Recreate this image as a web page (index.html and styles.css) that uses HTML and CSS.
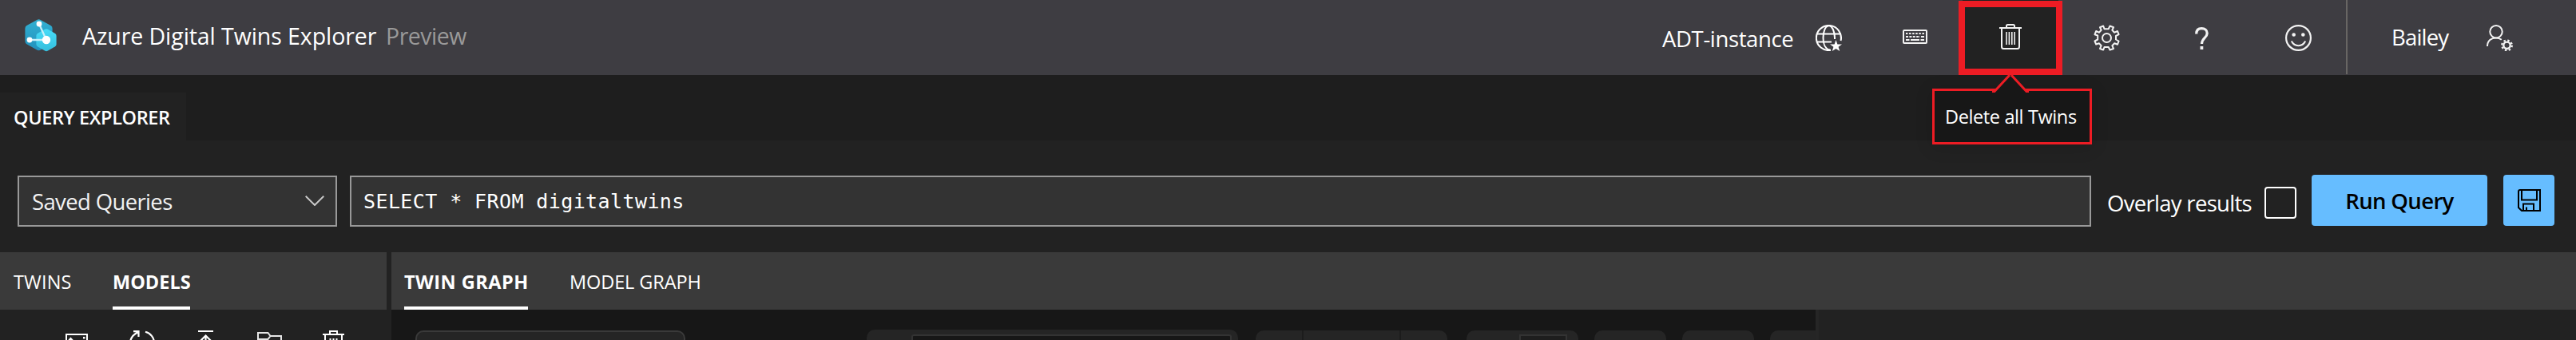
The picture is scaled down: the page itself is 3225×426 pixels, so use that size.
FILE: index.html
```
<!DOCTYPE html>
<html lang="en">
<head>
<meta charset="utf-8">
<title>Azure Digital Twins Explorer</title>
<link rel="stylesheet" href="styles.css">
</head>
<body>
<header class="header">
  <svg class="logo" viewBox="0 0 40 41">
    <defs>
      <linearGradient id="back" x1="0" y1="0" x2="0" y2="1"><stop offset="0" stop-color="#32b0d2"/><stop offset="1" stop-color="#2191bd"/></linearGradient>
      <linearGradient id="front" x1="0" y1="0" x2="0" y2="1"><stop offset="0" stop-color="#47dcf8"/><stop offset="1" stop-color="#35bedd"/></linearGradient>
    </defs>
    <path fill="url(#back)" d="M15.200.900Q17.500-.400 19.800.900L32.600 8Q34.600 9.200 34.600 11.700V27.500Q34.600 30 32.600 31.200L19.800 38.500Q17.500 39.800 15.200 38.500L2.400 31.200Q.400 30 .400 27.500V11.700Q.400 9.200 2.400 8Z"/>
    <path fill="url(#front)" d="M25 12.800Q27 11.700 29 12.800L37.700 17.700Q39.600 18.800 39.600 21V31.300Q39.600 33.500 37.700 34.600L29 39.600Q27 40.700 25 39.600L16.300 34.600Q14.400 33.500 14.400 31.300V21Q14.400 18.800 16.300 17.700Z"/>
    <path stroke="#c6f0fa" stroke-width="2.300" fill="none" d="M18 6 27 26H6"/>
    <circle cx="18" cy="6" r="3.400" fill="#fff"/><circle cx="6" cy="26" r="3.400" fill="#fff"/><circle cx="27" cy="26" r="5.200" fill="#fff"/>
  </svg>
  <div class="title">Azure Digital Twins Explorer</div>
  <div class="preview">Preview</div>
  <div class="instance">
    <span class="instance-name">ADT-instance</span>
    <svg class="icon" viewBox="0 0 33 33">
      <g fill="none" stroke="#fff" stroke-width="2">
        <path d="M31.500 20A15.500 15.500 0 1 0 19 31.800M31.800 19A15.500 15.500 0 0 0 31 11"/>
        <path d="M18.500 31.500C12 31 9.500 24 9.500 16.500S12 1.200 16.500 1.200 24 9 24 16.500V18M2 11.500H31M2 21.500H20"/>
      </g>
      <path fill="#fff" d="M25.500 19 27.400 24.400H33L28.600 27.800 30.200 33 25.500 29.900 20.800 33 22.400 27.800 18 24.400H23.600Z"/>
    </svg>
  </div>
  <button class="command" aria-label="Keyboard shortcuts">
    <svg class="icon keyboard" viewBox="0 0 31 18">
      <rect x="1" y="1" width="29" height="16" rx="1" fill="none" stroke="#f2f2f2" stroke-width="2"/>
      <path stroke="#f2f2f2" stroke-width="2" d="M4 5H27" stroke-dasharray="2.400 1.700"/>
      <path stroke="#f2f2f2" stroke-width="2" d="M4 9H22" stroke-dasharray="3 1.400"/>
      <path stroke="#f2f2f2" stroke-width="2" d="M23 9H27M4 13H8.500M10 13H21M22.500 13H27"/>
    </svg>
  </button>
  <button class="command command-active" aria-label="Delete all Twins">
    <svg class="icon trash" viewBox="0 0 28 32">
      <path fill="none" stroke="#f2f2f2" stroke-width="2" d="M0 5H28M9 5V2.500Q9 1 10.500 1H17.500Q19 1 19 2.500V5M3 5V28.500Q3 31 5.500 31H22.500Q25 31 25 28.500V5"/>
      <path fill="none" stroke="#f2f2f2" stroke-width="1.600" d="M9 10V26M12.400 10V26M15.800 10V26M19.200 10V26"/>
    </svg>
    <span class="highlight"></span>
    <span class="tooltip">Delete all Twins
      <svg class="pointer" viewBox="0 0 46 22"><path fill="#171717" d="M2 22 23 0 44 22Z"/><path fill="none" stroke="#ed1c24" stroke-width="3" d="M0 20.500H3L22 0M24 0 43 20.500H46"/></svg>
    </span>
  </button>
  <button class="command" aria-label="Settings">
    <svg class="icon" viewBox="0 0 33 33">
      <path fill="none" stroke="#f2f2f2" stroke-width="2" stroke-linejoin="round" d="M13.500 5.200 12.200 1.500 8 3.200 9.700 6.800 6.800 9.700 3.200 8 1.500 12.200 5.200 13.500V18.500L1.500 20.500 3.200 24.500 6.800 23.300 9.700 26.200 8 30 12.200 31.500 13.500 28H18.700L20.500 31.500 25 30 23.300 26.200 26.200 23.300 30 24.700 31.600 20.500 28 18.500V14L31.600 12.200 30 8 26.200 9.700 23.300 6.800 25 3.200 20.500 1.500 18.700 5.200Z"/>
      <circle cx="16.500" cy="16.500" r="5.500" fill="none" stroke="#f2f2f2" stroke-width="2"/>
    </svg>
  </button>
  <button class="command" aria-label="Help">
    <svg class="icon help" viewBox="0 0 17 28">
      <path fill="none" stroke="#f2f2f2" stroke-width="3.200" d="M1.700 8.500C1.700 4 4.300 1.700 8.300 1.700S15.200 4 15.200 7.700C15.200 13.500 8.500 13.500 8.500 21"/><path fill="#f2f2f2" d="M6.500 24H10.300V28H6.500Z"/>
    </svg>
  </button>
  <button class="command" aria-label="Feedback">
    <svg class="icon" viewBox="0 0 33 33">
      <circle cx="16.500" cy="16.500" r="15.400" fill="none" stroke="#f2f2f2" stroke-width="2.200"/>
      <circle cx="10.700" cy="12.500" r="2.300" fill="#f2f2f2"/><circle cx="22.300" cy="12.500" r="2.300" fill="#f2f2f2"/>
      <path fill="none" stroke="#f2f2f2" stroke-width="2" d="M7.800 20.500C11.500 28 21.500 28 25.200 20.500"/>
    </svg>
  </button>
  <div class="user">
    <span class="user-name">Bailey</span>
    <svg class="icon" viewBox="0 0 33 33">
      <g fill="none" stroke="#f2f2f2" stroke-width="2">
        <circle cx="12" cy="8.700" r="7.700"/><path d="M1 27C1 20 6 16.400 12 16.400 14.800 16.400 17 17.300 18.800 18.800"/>
        <circle cx="25.500" cy="25.800" r="4.200" stroke-width="2.400"/>
      </g>
      <circle cx="25.500" cy="25.800" r="6.300" fill="none" stroke="#f2f2f2" stroke-width="2.200" stroke-dasharray="2.400 2.548"/>
    </svg>
  </div>
</header>

<div class="explorer-tabs"><div class="explorer-tab">QUERY EXPLORER</div></div>

<section class="query">
  <div class="dropdown">Saved Queries
    <svg class="chevron" viewBox="0 0 24 13"><path fill="none" stroke="#c8c8c8" stroke-width="2" d="M.700.700 12 12 23.300.700"/></svg>
  </div>
  <div class="query-text">SELECT * FROM digitaltwins</div>
  <div class="overlay-label">Overlay results</div>
  <div class="checkbox"></div>
  <button class="run">Run Query</button>
  <button class="save" aria-label="Save query">
    <svg class="save-icon" viewBox="0 0 29 28"><path fill="none" stroke="#000" stroke-width="2" d="M3 1H28V27H5L1 23V3Q1 1 3 1ZM5 1V13.500H24V1M7 27V18.500H20V27M11 27V22.500"/></svg>
  </button>
</section>

<main class="workspace">
  <section class="side">
    <nav class="tabs">
      <div class="tab twins">TWINS</div>
      <div class="tab models selected">MODELS</div>
    </nav>
    <div class="side-tools">
      <svg class="tool image" viewBox="0 0 28 28"><path fill="none" stroke="#fff" stroke-width="2" d="M1 1H27V23H1ZM1 12 6.500 6 16 16"/><path fill="#fff" d="M22 4H24.500V6.500H22Z"/></svg>
      <svg class="tool refresh" viewBox="0 0 32 32"><path fill="none" stroke="#fff" stroke-width="2.200" d="M5 1.200H11.500V8M11 2C5 5 1 10 1 16M20 1.800C26.500 3.500 31 9 31 16"/></svg>
      <svg class="tool upload" viewBox="0 0 19 32"><path fill="none" stroke="#fff" stroke-width="2.200" d="M0 1H19M9.500 30V7M1.500 14.500 9.500 6.500 17.500 14.500"/></svg>
      <svg class="tool folder" viewBox="0 0 31 28"><path fill="none" stroke="#e6e6e6" stroke-width="2" d="M1 26V1H13.500L16.500 5H30V26ZM1 9H13.500L16.500 5"/></svg>
      <svg class="tool bin" viewBox="0 0 27 32"><path fill="none" stroke="#fff" stroke-width="2" d="M0 5H27M9 5V1H18V5M3 5V31H24V5M9.500 10V26M13.500 10V26M17.500 10V26"/></svg>
    </div>
  </section>
  <section class="graph">
    <nav class="tabs">
      <div class="tab twin-graph selected">TWIN GRAPH</div>
      <div class="tab model-graph">MODEL GRAPH</div>
    </nav>
    <div class="graph-body">
      <div class="canvas">
        <div class="card legend"></div>
        <div class="card filter"><div class="filter-input"></div></div>
        <div class="card split"><span></span><span></span><span></span></div>
        <div class="card zoom"><div class="zoom-input"></div></div>
        <div class="card small"></div>
        <div class="card small second"></div>
        <div class="card last"></div>
      </div>
      <div class="detail"></div>
    </div>
  </section>
</main>
</body>
</html>
```
FILE: styles.css
```
* { box-sizing: border-box; }
body {
  margin: 0;
  height: 426px;
  overflow: hidden;
  background: #222;
  color: #fff;
  font-family: "Open Sans", "Noto Sans", sans-serif;
  white-space: nowrap;
}
button { margin: 0; padding: 0; border: 0; background: none; color: inherit; font: inherit; }
svg { display: block; flex: none; }

.header { display: flex; height: 94px; background: #3e3d42; }
.logo { width: 40px; height: 41px; margin: 24px 0 0 31px; }
.title { margin-left: 32px; width: 380px; font-size: 28.5px; letter-spacing: -0.07px; line-height: 90px; }
.preview { font-size: 28.5px; letter-spacing: -0.5px; line-height: 90px; color: #999; }
.instance { display: grid; grid-template-columns: 192px 33px; width: 256px; margin-left: auto; }
.instance-name { font-size: 27.5px; letter-spacing: -0.37px; line-height: 97px; }
.icon { width: 33px; height: 33px; margin-top: 31px; }
.command { position: relative; display: flex; justify-content: center; align-items: flex-start; width: 120px; height: 94px; }
.command-active { background: #222; z-index: 1; }
.keyboard { width: 31px; height: 18px; margin-top: 37px; }
.trash { width: 28px; height: 32px; margin-top: 30px; }
.help { width: 17px; height: 28px; margin: 34px 2px 0 0; }
.highlight { position: absolute; left: -5px; top: 1px; width: 130px; height: 93px; border: 8px solid #ed1c24; }
.tooltip {
  position: absolute;
  left: -38px;
  top: 111px;
  width: 200px;
  height: 70px;
  padding-left: 13px;
  border: 3px solid #ed1c24;
  background: #171717;
  box-shadow: 0 3px 20px rgba(0, 0, 0, 0.15);
  font-size: 23.5px;
  letter-spacing: -0.38px;
  line-height: 64px;
  text-align: left;
}
.pointer { position: absolute; left: 72px; top: -20px; width: 46px; height: 22px; }
.user { display: grid; grid-template-columns: 119px 33px; width: 288px; height: 93px; padding-left: 55px; border-left: 2px solid #686664; }
.user-name { font-size: 27.5px; letter-spacing: -0.8px; line-height: 93px; }

.explorer-tabs { height: 82px; padding-top: 22px; background: #1e1e1e; }
.explorer-tab { width: 233px; height: 60px; padding-left: 17px; background: #222; font-size: 23.5px; font-weight: 600; letter-spacing: -0.35px; line-height: 62px; }

.query { display: flex; height: 140px; padding: 44px 27px 0 22px; }
.dropdown {
  display: flex;
  justify-content: space-between;
  width: 400px;
  height: 64px;
  padding: 0 14px 0 16px;
  border: 2px solid #999;
  background: #333;
  color: #f2f2f2;
  font-size: 27.5px;
  letter-spacing: -0.64px;
  line-height: 62px;
}
.chevron { width: 24px; height: 13px; margin-top: 23px; }
.query-text {
  width: 2180px;
  height: 64px;
  margin-left: 16px;
  padding-left: 15px;
  border: 2px solid #999;
  background: #333;
  font-family: "DejaVu Sans Mono", monospace;
  font-size: 25px;
  letter-spacing: 0.4px;
  line-height: 62px;
}
.overlay-label { width: 197px; margin-left: 20px; font-size: 27.5px; letter-spacing: -0.7px; line-height: 69px; }
.checkbox { width: 40px; height: 40px; margin-top: 14px; border: 2px solid #fff; border-radius: 4px; }
.run, .save { height: 64px; margin-top: -1px; border-radius: 4px; background: #66bdff; color: #000; }
.run { width: 220px; margin-left: 19px; font-size: 27.5px; font-weight: 600; letter-spacing: -0.65px; line-height: 65px; }
.save { display: flex; align-items: center; justify-content: center; width: 64px; margin-left: 20px; }
.save-icon { width: 29px; height: 28px; }

.workspace { display: flex; height: 110px; }
.side { width: 484px; margin-right: 6px; }
.graph { flex: 1; }
.tabs { display: flex; height: 72px; background: #3a3a3a; font-size: 23.5px; }
.tab { height: 72px; line-height: 74px; }
.selected { font-weight: 700; box-shadow: inset 0 -4px #fff; }
.twins { margin-left: 17px; letter-spacing: 0.15px; width: 124px; }
.models { width: 97px; }
.twin-graph { width: 155px; margin-left: 16px; letter-spacing: 0.5px; }
.model-graph { margin-left: 52px; letter-spacing: -0.1px; }
.side-tools { display: flex; height: 38px; padding: 26px 0 0 82px; overflow: hidden; }
.image { width: 28px; height: 28px; margin-top: 4px; }
.refresh { width: 32px; height: 32px; margin-left: 52px; }
.upload { width: 19px; height: 32px; margin-left: 54px; }
.folder { width: 31px; height: 28px; margin: 2px 0 0 55px; }
.bin { width: 27px; height: 32px; margin-left: 51px; }

.graph-body { display: flex; height: 38px; }
.canvas { display: flex; width: 1783px; padding: 26px 0 0 30px; background: #171717; overflow: hidden; }
.card { flex: none; height: 40px; border-radius: 10px 10px 0 0; background: #252525; }
.legend { width: 338px; border: 2px solid #3a3a3a; }
.filter { width: 465px; margin: -1px 0 0 227px; padding: 6px 8px 0 56px; }
.filter-input { height: 34px; border: 2px solid #333; border-radius: 3px; background: #171717; }
.split { display: flex; width: 240px; margin-left: 22px; }
.split span:nth-child(1) { width: 58px; }
.split span:nth-child(2) { width: 124px; border: solid #1c1c1c; border-width: 0 2px; }
.zoom { width: 140px; margin-left: 24px; padding: 5px 14px 0 66px; }
.zoom-input { height: 34px; border: 2px solid #333; background: #1e1e1e; }
.small { width: 90px; margin-left: 20px; }
.last { width: 90px; margin-left: 20px; }
.detail { flex: 1; border-left: 4px solid #262626; background: #222; }
```
